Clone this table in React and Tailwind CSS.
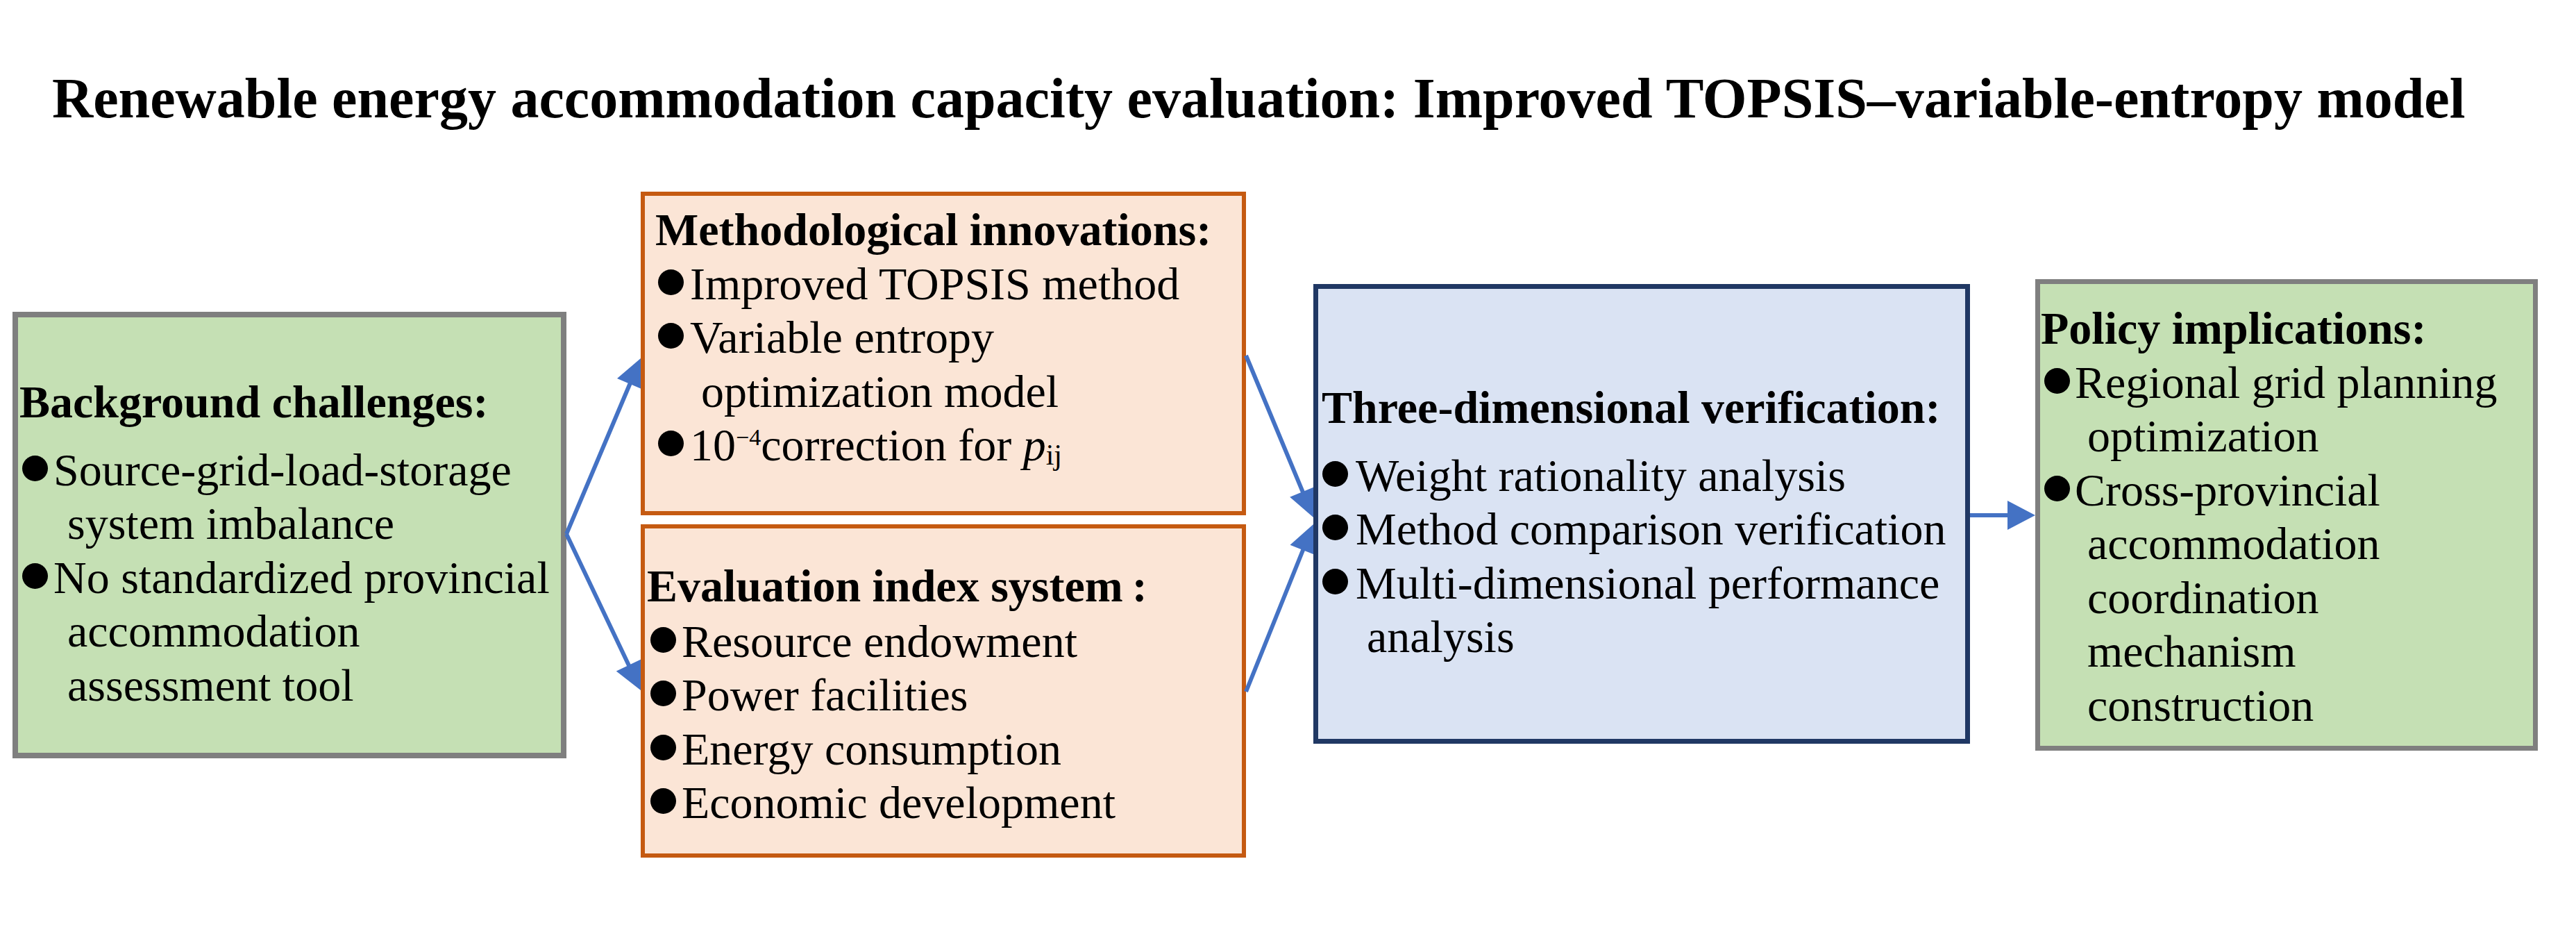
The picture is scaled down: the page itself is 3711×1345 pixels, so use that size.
import React from 'react';

const BLUE = '#4472c4';

// arrow head polygon + shortened line end, computed from the segment
const arrow = (x1, y1, x2, y2, L = 40, W = 20) => {
  const len = Math.hypot(x2 - x1, y2 - y1);
  const ux = (x2 - x1) / len;
  const uy = (y2 - y1) / len;
  const bx = x2 - ux * L;
  const by = y2 - uy * L;
  return {
    line: { x1, y1, x2: bx + ux * 2, y2: by + uy * 2 },
    head: `${x2},${y2} ${bx - uy * W},${by + ux * W} ${bx + uy * W},${by - ux * W}`,
  };
};

const Arrows = ({ width, segs }) => (
  <svg width={width} height="1000" className="shrink-0 overflow-visible">
    {segs.map((s, i) => {
      const a = arrow(...s);
      return (
        <g key={i}>
          <line {...a.line} stroke={BLUE} strokeWidth="6" />
          <polygon points={a.head} fill={BLUE} />
        </g>
      );
    })}
  </svg>
);

const Item = ({ lead, indent, children }) => (
  <div className="flex">
    <div className={`shrink-0 ${lead}`}>
      <div className="mt-[18px] h-[37px] w-[37px] rounded-full bg-black" />
    </div>
    <div className={`whitespace-nowrap ${indent}`}>{children}</div>
  </div>
);

export default function App() {
  return (
    <div className="w-[3711px] h-[1345px] overflow-hidden bg-white text-black font-['Liberation_Serif','Times_New_Roman',serif]">
      <p className="ml-[75px] mt-[101px] h-[82px] whitespace-nowrap text-[82px] leading-[82px] font-bold">
        Renewable energy accommodation capacity evaluation: Improved TOPSIS–variable-entropy model
      </p>

      <div className="mt-[87px] flex items-start text-[66px] leading-[77.5px]">
        {/* background */}
        <div className="ml-[18px] mt-[179px] h-[643px] w-[798px] shrink-0 border-[8px] border-[#7f7f7f] bg-[#c5e0b4] pl-[2px] pt-[83px]">
          <div className="mb-[20px] font-bold">Background challenges:</div>
          <Item lead="w-[49px] pl-[4px]" indent="pl-[20px] indent-[-20px]">
            Source-grid-load-storage
            <br />
            system imbalance
          </Item>
          <Item lead="w-[49px] pl-[4px]" indent="pl-[20px] indent-[-20px]">
            No standardized provincial
            <br />
            accommodation
            <br />
            assessment tool
          </Item>
        </div>

        <Arrows width={107} segs={[[0, 499, 107, 246], [0, 499, 107, 724]]} />

        <div className="mt-[6px] flex w-[872px] shrink-0 flex-col gap-[13px]">
          <div className="h-[466px] border-[6px] border-[#c55a11] bg-[#fbe5d6] pl-[15px] pt-[10px]">
            <div className="font-bold">Methodological innovations:</div>
            <Item lead="w-[50px] pl-[4px]" indent="pl-[16px] indent-[-16px]">
              Improved TOPSIS method
            </Item>
            <Item lead="w-[50px] pl-[4px]" indent="pl-[16px] indent-[-16px]">
              Variable entropy
              <br />
              optimization model
            </Item>
            <Item lead="w-[50px] pl-[4px]" indent="pl-[16px] indent-[-16px]">
              10<sup className="top-[-22px] text-[34px]">−4</sup>correction for{' '}
              <i>p</i>
              <sub className="bottom-[-6px] text-[42px]">ij</sub>
            </Item>
          </div>
          <div className="h-[480px] border-[6px] border-[#c55a11] bg-[#fbe5d6] pl-[3px] pt-[44px]">
            <div className="mb-[2px] font-bold">
              Evaluation index system<span className="ml-[13px]">:</span>
            </div>
            <Item lead="w-[50px] pl-[5px]">Resource endowment</Item>
            <Item lead="w-[50px] pl-[5px]">Power facilities</Item>
            <Item lead="w-[50px] pl-[5px]">Energy consumption</Item>
            <Item lead="w-[50px] pl-[5px]">Economic development</Item>
          </div>
        </div>

        <Arrows width={97} segs={[[0, 242, 97, 475], [0, 726, 97, 485]]} />

        {/* verification */}
        <div className="mt-[139px] h-[662px] w-[946px] shrink-0 border-[7px] border-[#203864] bg-[#dae3f3] pl-[5px] pt-[132px]">
          <div className="mb-[20px] font-bold">Three-dimensional verification:</div>
          <Item lead="w-[49px] pl-[1px]" indent="pl-[16px] indent-[-16px]">
            Weight rationality analysis
          </Item>
          <Item lead="w-[49px] pl-[1px]" indent="pl-[16px] indent-[-16px]">
            Method comparison verification
          </Item>
          <Item lead="w-[49px] pl-[1px]" indent="pl-[16px] indent-[-16px]">
            Multi-dimensional performance
            <br />
            analysis
          </Item>
        </div>

        <Arrows width={94} segs={[[0, 472, 94, 472, 40, 21]]} />

        {/* policy */}
        <div className="mt-[132px] h-[679px] w-[724px] shrink-0 border-[7px] border-[#7f7f7f] bg-[#c5e0b4] pl-[1px] pt-[25px]">
          <div className="font-bold">Policy implications:</div>
          <Item lead="w-[49px] pl-[5px]" indent="pl-[18px] indent-[-18px]">
            Regional grid planning
            <br />
            optimization
          </Item>
          <Item lead="w-[49px] pl-[5px]" indent="pl-[18px] indent-[-18px]">
            Cross-provincial
            <br />
            accommodation
            <br />
            coordination
            <br />
            mechanism
            <br />
            construction
          </Item>
        </div>
      </div>
    </div>
  );
}
